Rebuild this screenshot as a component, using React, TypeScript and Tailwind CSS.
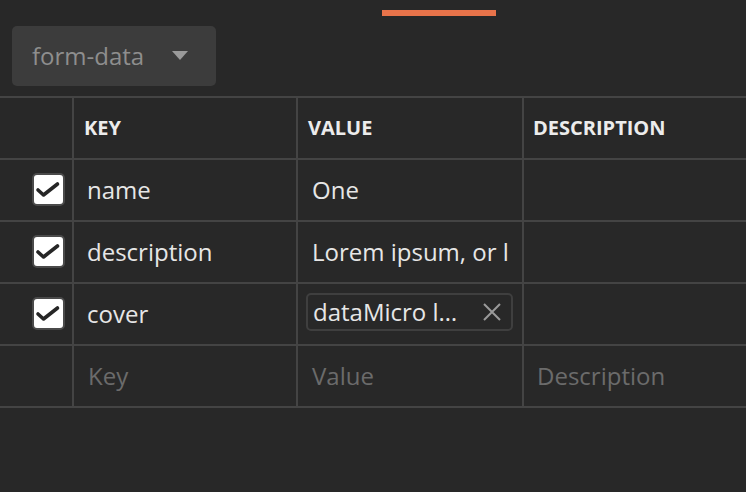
const rows = [
  { key: 'name', value: 'One', file: false },
  { key: 'description', value: 'Lorem ipsum, or lorem ipsum as it is sometimes known', file: false },
  { key: 'cover', value: 'dataMicro logo.png', file: true },
]

function Check() {
  return (
    <div className="w-[33px] h-[33px] rounded-[5px] bg-white border-2 border-[#4a4a4a]">
      <svg width="29" height="29" viewBox="0 0 29 29" fill="none">
        <path d="M4 15 L9.5 20 L23.5 9" stroke="#262626" strokeWidth="3.6" strokeLinecap="round" strokeLinejoin="round" />
      </svg>
    </div>
  )
}

export default function App() {
  return (
    <div className="w-[746px] h-[492px] bg-[#282828] overflow-hidden font-['Open_Sans',sans-serif]">
      {/* active tab underline */}
      <div className="pt-[10px] pl-[382px]">
        <div className="w-[114px] h-[6px] bg-[#e8734a]" />
      </div>

      {/* body type select */}
      <div className="pt-[10px] pl-[12px] pb-[10px]">
        <div className="w-[204px] h-[60px] rounded-[5px] bg-[#3c3c3c] flex items-center pl-[20px] pr-[28px] justify-between">
          <span className="text-[24px] text-[#8e8e8e]">form-data</span>
          <svg width="16" height="10" viewBox="0 0 16 10">
            <path d="M0 0 H16 L8 9 Z" fill="#9a9a9a" />
          </svg>
        </div>
      </div>

      {/* params table */}
      <div className="border-t-2 border-[#444444]">
        <div className="grid grid-cols-[74px_224px_226px_1fr] h-[62px] border-b-2 border-[#444444] text-[20px] font-bold text-[#ececec]">
          <div className="border-r-2 border-[#444444]" />
          <div className="border-r-2 border-[#444444] flex items-center pl-[10px]">KEY</div>
          <div className="border-r-2 border-[#444444] flex items-center pl-[10px]">VALUE</div>
          <div className="flex items-center pl-[9px]">DESCRIPTION</div>
        </div>

        {rows.map((r) => (
          <div
            key={r.key}
            className="grid grid-cols-[74px_224px_226px_1fr] h-[62px] border-b-2 border-[#444444] text-[24px] text-[#e6e6e6]"
          >
            <div className="border-r-2 border-[#444444] flex items-center justify-end pr-[7px] pb-[1px]">
              <Check />
            </div>
            <div className="border-r-2 border-[#444444] flex items-center pl-[13px] pb-[1px]">{r.key}</div>
            <div className="border-r-2 border-[#444444] flex items-center min-w-0 pb-[1px]">
              {r.file ? (
                <div className="ml-[8px] mb-[3px] w-[207px] h-[38px] rounded-[5px] border-2 border-[#3f3f3f] flex items-center pl-[5px] pr-[10px] justify-between">
                  <span className="truncate w-[150px]">{r.value}</span>
                  <svg width="18" height="18" viewBox="0 0 18 18" fill="none">
                    <path d="M1 1 L17 17 M17 1 L1 17" stroke="#9a9a9a" strokeWidth="2" />
                  </svg>
                </div>
              ) : (
                <div className="ml-[14px] w-[197px] overflow-hidden whitespace-nowrap">{r.value}</div>
              )}
            </div>
            <div />
          </div>
        ))}

        <div className="grid grid-cols-[74px_224px_226px_1fr] h-[62px] border-b-2 border-[#444444] text-[24px] text-[#6b6b6b]">
          <div className="border-r-2 border-[#444444]" />
          <div className="border-r-2 border-[#444444] flex items-center pl-[14px]">Key</div>
          <div className="border-r-2 border-[#444444] flex items-center pl-[14px]">Value</div>
          <div className="flex items-center pl-[13px]">Description</div>
        </div>
      </div>
    </div>
  )
}
